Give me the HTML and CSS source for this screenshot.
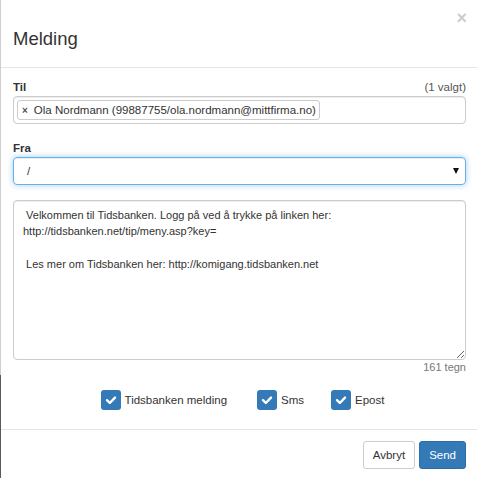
FILE: index.html
```html
<!DOCTYPE html>
<html lang="no">
<head>
<meta charset="utf-8">
<title>Melding</title>
<link rel="stylesheet" href="styles.css">
</head>
<body>
<div class="modal">
  <div class="modal-header">
    <h4 class="modal-title">Melding</h4>
    <span class="close">×</span>
  </div>
  <div class="modal-body">
    <div class="label-row">
      <label class="label">Til</label>
      <span class="count">(1 valgt)</span>
    </div>
    <div class="input token-input">
      <span class="token"><span class="token-x">×</span>Ola Nordmann (99887755/ola.nordmann@mittfirma.no)</span>
    </div>
    <div class="label-row fra">
      <label class="label">Fra</label>
    </div>
    <div class="input select">
      <span class="select-value">/</span>
      <span class="caret"></span>
    </div>
    <textarea class="message"> Velkommen til Tidsbanken. Logg på ved å trykke på linken her:
http://tidsbanken.net/tip/meny.asp?key=

 Les mer om Tidsbanken her: http://komigang.tidsbanken.net</textarea>
    <div class="chars">161 tegn</div>
    <div class="checks">
      <div class="check"><span class="box"><svg viewBox="0 0 20 20" width="20" height="20"><path d="M6 10.2 L8.8 13 L14 7.6" fill="none" stroke="#fff" stroke-width="2.4" stroke-linecap="round" stroke-linejoin="round"/></svg></span>Tidsbanken melding</div>
      <div class="check"><span class="box"><svg viewBox="0 0 20 20" width="20" height="20"><path d="M6 10.2 L8.8 13 L14 7.6" fill="none" stroke="#fff" stroke-width="2.4" stroke-linecap="round" stroke-linejoin="round"/></svg></span>Sms</div>
      <div class="check"><span class="box"><svg viewBox="0 0 20 20" width="20" height="20"><path d="M6 10.2 L8.8 13 L14 7.6" fill="none" stroke="#fff" stroke-width="2.4" stroke-linecap="round" stroke-linejoin="round"/></svg></span>Epost</div>
    </div>
  </div>
  <div class="modal-footer">
    <button class="btn btn-default">Avbryt</button>
    <button class="btn btn-primary">Send</button>
  </div>
</div>
</body>
</html>
```
FILE: styles.css
```css
html, body {
  margin: 0;
  padding: 0;
}
body {
  width: 477px;
  height: 478px;
  overflow: hidden;
  font-family: "Liberation Sans", Arial, sans-serif;
  font-size: 11.5px;
  color: #333;
  background:
    linear-gradient(#cfcfcf, #cfcfcf) 0 0 / 1px 375px no-repeat,
    linear-gradient(#5a5a5a, #5a5a5a) 0 375px / 1px 200px no-repeat,
    #fff;
}
.modal {
  margin-left: 1px;
  height: 478px;
  background: #fff;
}
.modal-header {
  height: 68px;
  box-sizing: border-box;
  border-bottom: 1px solid #e5e5e5;
  display: flex;
  justify-content: space-between;
  padding: 0 10px 0 12px;
}
.modal-title {
  margin: 0;
  padding-top: 28px;
  font-size: 18.5px;
  font-weight: normal;
  line-height: 22px;
  color: #333;
}
.close {
  margin-top: 8px;
  font-size: 18px;
  font-weight: bold;
  line-height: 20px;
  color: #cdcdcd;
}
.modal-body {
  padding: 11px 11px 0 12px;
  display: flex;
  flex-direction: column;
}
.label-row {
  display: flex;
  justify-content: space-between;
  height: 17px;
  line-height: 17px;
}
.label-row.fra {
  margin-top: 16px;
}
.label {
  font-weight: bold;
}
.count {
  color: #555;
  font-size: 11.5px;
}
.input {
  box-sizing: border-box;
  height: 28px;
  border: 1px solid #ccc;
  border-radius: 4px;
  box-shadow: inset 0 1px 1px rgba(0,0,0,.075);
  display: flex;
  align-items: center;
}
.token-input {
  padding-left: 3px;
}
.token {
  height: 20px;
  box-sizing: border-box;
  border: 1px solid #ccc;
  border-radius: 3px;
  padding: 0 3px 0 4px;
  line-height: 18px;
  color: #333;
}
.token-x {
  font-size: 10px;
  font-weight: bold;
  color: #555;
  margin-right: 6px;
}
.select {
  border-color: #66afe9;
  box-shadow: inset 0 1px 1px rgba(0,0,0,.075), 0 0 6px rgba(102,175,233,.6);
  justify-content: space-between;
  padding: 0 6px 0 13px;
}
.select-value {
  color: #333;
}
.caret {
  width: 0;
  height: 0;
  border-left: 3px solid transparent;
  border-right: 3px solid transparent;
  border-top: 6px solid #111;
}
.message {
  margin: 15px 0 0 0;
  box-sizing: border-box;
  height: 160px;
  width: 100%;
  border: 1px solid #ccc;
  border-radius: 4px;
  box-shadow: inset 0 1px 1px rgba(0,0,0,.075);
  padding: 6px 9px;
  font-family: "Liberation Sans", Arial, sans-serif;
  font-size: 11px;
  line-height: 16.3px;
  color: #333;
  resize: vertical;
  outline: none;
}
.chars {
  text-align: right;
  font-size: 11px;
  color: #777;
  line-height: 14px;
  margin-top: 0;
}
.checks {
  display: flex;
  justify-content: center;
  gap: 30px;
  margin-top: 16px;
  padding-left: 6px;
}
.check {
  display: flex;
  align-items: center;
  gap: 4px;
  line-height: 20px;
}
.check + .check + .check {
  margin-left: -3px;
}
.box {
  width: 20px;
  height: 20px;
  border-radius: 3px;
  background: #337ab7;
  display: block;
}
.box svg {
  display: block;
}
.modal-footer {
  margin-top: 19px;
  border-top: 1px solid #e5e5e5;
  display: flex;
  justify-content: flex-end;
  gap: 4px;
  padding: 11px 11px 0 0;
}
.btn {
  height: 28px;
  box-sizing: border-box;
  padding: 0 9px;
  border: 1px solid #ccc;
  border-radius: 3px;
  font-family: "Liberation Sans", Arial, sans-serif;
  font-size: 11.5px;
  line-height: 26px;
  background: #fff;
  color: #333;
}
.btn-primary {
  background: #337ab7;
  border-color: #2e6da4;
  color: #fff;
}
```
